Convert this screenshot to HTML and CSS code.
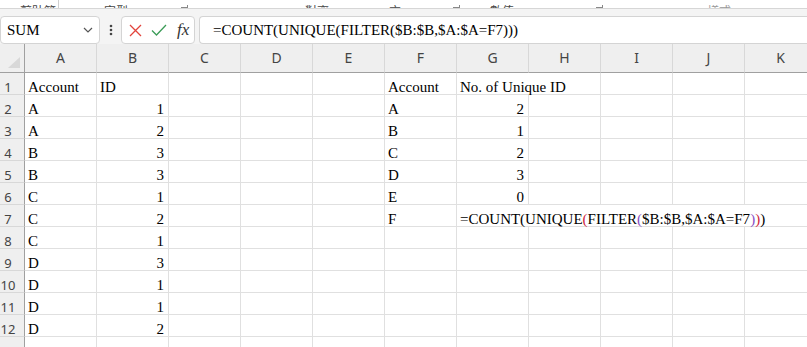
FILE: index.html
```html
<!DOCTYPE html>
<html lang="zh-Hant">
<head>
    <meta charset="UTF-8">
    <title>Excel - COUNT UNIQUE FILTER</title>
    <link rel="stylesheet" href="styles.css">
</head>
<body>
    <div class="ribbon">
        <span class="rb-text rb1">剪貼簿</span>
        <span class="rb-sep"></span>
        <span class="rb-text rb2">字型</span>
        <span class="rb-launch rb3"></span>
        <span class="rb-text rb4">對齊</span>
        <span class="rb-text rb5">方</span>
        <span class="rb-launch rb6"></span>
        <span class="rb-text rb7">數值</span>
        <span class="rb-launch rb8"></span>
        <span class="rb-text rb9">樣式</span>
    </div>

    <div class="formula-bar">
        <div class="name-box">
            <span>SUM</span>
            <svg width="10" height="6" viewBox="0 0 10 6"><path d="M1 1l4 4 4-4" fill="none" stroke="#555" stroke-width="1.2"/></svg>
        </div>
        <div class="more">
            <svg width="4" height="12" viewBox="0 0 4 12"><circle cx="2" cy="2" r="1.3" fill="#444"/><circle cx="2" cy="6" r="1.3" fill="#444"/><circle cx="2" cy="10" r="1.3" fill="#444"/></svg>
        </div>
        <div class="fx-box">
            <svg width="13" height="13" viewBox="0 0 13 13"><path d="M1 1l11 11M12 1L1 12" stroke="#e2443c" stroke-width="1.3"/></svg>
            <svg width="16" height="12" viewBox="0 0 16 12"><path d="M1 6.5l4.5 4.5L15 1" fill="none" stroke="#3c9c58" stroke-width="1.3"/></svg>
            <i>fx</i>
        </div>
        <div class="formula-input">=COUNT(UNIQUE(FILTER($B:$B,$A:$A=F7)))</div>
    </div>

    <div class="sheet">
        <!-- column headers -->
        <div class="corner"><span class="tri"></span></div>
        <div class="hd">A</div><div class="hd">B</div><div class="hd">C</div><div class="hd">D</div>
        <div class="hd">E</div><div class="hd">F</div><div class="hd">G</div><div class="hd">H</div>
        <div class="hd">I</div><div class="hd">J</div><div class="hd">K</div>

        <!-- row 1 -->
        <div class="rn">1</div><div>Account</div><div>ID</div><div></div><div></div><div></div>
        <div>Account</div><div class="span2">No. of Unique ID</div><div></div><div></div><div></div>
        <!-- row 2 -->
        <div class="rn">2</div><div>A</div><div class="num">1</div><div></div><div></div><div></div>
        <div>A</div><div class="num">2</div><div></div><div></div><div></div><div></div>
        <!-- row 3 -->
        <div class="rn">3</div><div>A</div><div class="num">2</div><div></div><div></div><div></div>
        <div>B</div><div class="num">1</div><div></div><div></div><div></div><div></div>
        <!-- row 4 -->
        <div class="rn">4</div><div>B</div><div class="num">3</div><div></div><div></div><div></div>
        <div>C</div><div class="num">2</div><div></div><div></div><div></div><div></div>
        <!-- row 5 -->
        <div class="rn">5</div><div>B</div><div class="num">3</div><div></div><div></div><div></div>
        <div>D</div><div class="num">3</div><div></div><div></div><div></div><div></div>
        <!-- row 6 -->
        <div class="rn">6</div><div>C</div><div class="num">1</div><div></div><div></div><div></div>
        <div>E</div><div class="num">0</div><div></div><div></div><div></div><div></div>
        <!-- row 7 -->
        <div class="rn">7</div><div>C</div><div class="num">2</div><div></div><div></div><div></div>
        <div>F</div>
        <div class="span5">=COUNT(UNIQUE<span class="p-red">(</span>FILTER<span class="p-purple">(</span>$B:$B,$A:$A=F7<span class="p-purple">)</span><span class="p-red">)</span>)</div>
        <!-- row 8 -->
        <div class="rn">8</div><div>C</div><div class="num">1</div><div></div><div></div><div></div>
        <div></div><div></div><div></div><div></div><div></div><div></div>
        <!-- row 9 -->
        <div class="rn">9</div><div>D</div><div class="num">3</div><div></div><div></div><div></div>
        <div></div><div></div><div></div><div></div><div></div><div></div>
        <!-- row 10 -->
        <div class="rn">10</div><div>D</div><div class="num">1</div><div></div><div></div><div></div>
        <div></div><div></div><div></div><div></div><div></div><div></div>
        <!-- row 11 -->
        <div class="rn">11</div><div>D</div><div class="num">1</div><div></div><div></div><div></div>
        <div></div><div></div><div></div><div></div><div></div><div></div>
        <!-- row 12 -->
        <div class="rn">12</div><div>D</div><div class="num">2</div><div></div><div></div><div></div>
        <div></div><div></div><div></div><div></div><div></div><div></div>
        <!-- row 13 -->
        <div class="rn">13</div><div></div><div></div><div></div><div></div><div></div>
        <div></div><div></div><div></div><div></div><div></div><div></div>
    </div>
</body>
</html>
```

FILE: styles.css
```css
html, body {
    margin: 0;
    padding: 0;
    background-color: white;
    width: 807px;
    height: 347px;
    overflow: hidden;
}

/* ribbon bottom edge, only the foot of the group labels is visible */
.ribbon {
    height: 8px;
    overflow: hidden;
    display: flex;
    align-items: flex-end;
    background-color: white;
    font-family: "Noto Sans CJK TC", sans-serif;
    font-size: 12px;
    color: #444;
}
.rb-text {
    line-height: 12px;
    margin-bottom: -9px;
    white-space: nowrap;
}
.rb-sep {
    width: 1px;
    height: 8px;
    background-color: #d0d0d0;
}
.rb-launch {
    width: 6px;
    height: 2px;
    border-right: 1px solid #888;
    border-bottom: 1px solid #888;
}
.rb1 { margin-left: 20px; }
.rb-sep { margin-left: 2px; }
.rb2 { margin-left: 45px; }
.rb3 { margin-left: 53px; }
.rb4 { margin-left: 117px; }
.rb5 { margin-left: 60px; }
.rb6 { margin-left: 52px; }
.rb7 { margin-left: 30px; }
.rb8 { margin-left: 82px; }
.rb9 { margin-left: 104px; color: #999; }

/* formula bar */
.formula-bar {
    display: flex;
    align-items: stretch;
    height: 28px;
    padding-top: 7px;
    border-top: 1px solid #d6d6d6;
    background-color: #f4f4f4;
}
.name-box {
    width: 100px;
    box-sizing: border-box;
    display: flex;
    align-items: center;
    justify-content: space-between;
    padding: 0 6px 0 6px;
    background-color: white;
    border: 1px solid #d4d4d4;
    border-radius: 4px;
    font-family: "Liberation Serif", serif;
    font-size: 15px;
}
.more {
    width: 21px;
    display: flex;
    align-items: center;
    justify-content: center;
}
.fx-box {
    width: 74px;
    box-sizing: border-box;
    display: flex;
    align-items: center;
    gap: 9px;
    padding-left: 7px;
    background-color: white;
    border: 1px solid #d4d4d4;
    border-radius: 4px;
}
.fx-box i {
    font-family: "Liberation Serif", serif;
    font-size: 17px;
    color: #333;
    margin-left: 1px;
}
.formula-input {
    flex: 1;
    margin-left: 4px;
    padding-left: 13px;
    background-color: white;
    border: 1px solid #d4d4d4;
    border-right: none;
    border-radius: 4px 0 0 4px;
    font-family: "Liberation Serif", serif;
    font-size: 15px;
    line-height: 26px;
    white-space: nowrap;
}

/* worksheet grid */
.sheet {
    display: grid;
    grid-template-columns: 25px repeat(11, 72px);
    grid-template-rows: 29px;
    grid-auto-rows: 22px;
}
.sheet > div {
    box-sizing: border-box;
    border-right: 1px solid #e0e0e0;
    border-bottom: 1px solid #e0e0e0;
    padding: 6px 3px 0 3px;
    font-family: "Liberation Serif", serif;
    font-size: 15px;
    line-height: 16px;
    white-space: nowrap;
    color: black;
}
.sheet > .hd {
    padding: 0;
    background-color: #efefef;
    border-right-color: #d8d8d8;
    border-bottom-color: #a0a0a0;
    font-family: "Noto Sans", sans-serif;
    font-size: 14px;
    line-height: 28px;
    text-align: center;
    color: #444;
}
.sheet > .corner {
    position: relative;
    padding: 0;
    background-color: #efefef;
    border-right-color: #a0a0a0;
    border-bottom-color: #a0a0a0;
}
.tri {
    position: absolute;
    right: 4px;
    bottom: 4px;
    width: 0;
    height: 0;
    border-left: 12px solid transparent;
    border-bottom: 11px solid #d8d8d8;
}
.sheet > .rn {
    padding: 6px 8px 0 0;
    background-color: #efefef;
    border-right-color: #a0a0a0;
    border-bottom-color: #d8d8d8;
    font-family: "Noto Sans", sans-serif;
    font-size: 13px;
    text-align: center;
    color: #444;
}
.sheet > .num {
    text-align: right;
    padding-right: 4px;
}
.sheet > .span2 {
    grid-column: span 2;
}
.sheet > .span5 {
    grid-column: span 5;
}
.p-red {
    color: #d0243c;
}
.p-purple {
    color: #8a4fc4;
}
```
